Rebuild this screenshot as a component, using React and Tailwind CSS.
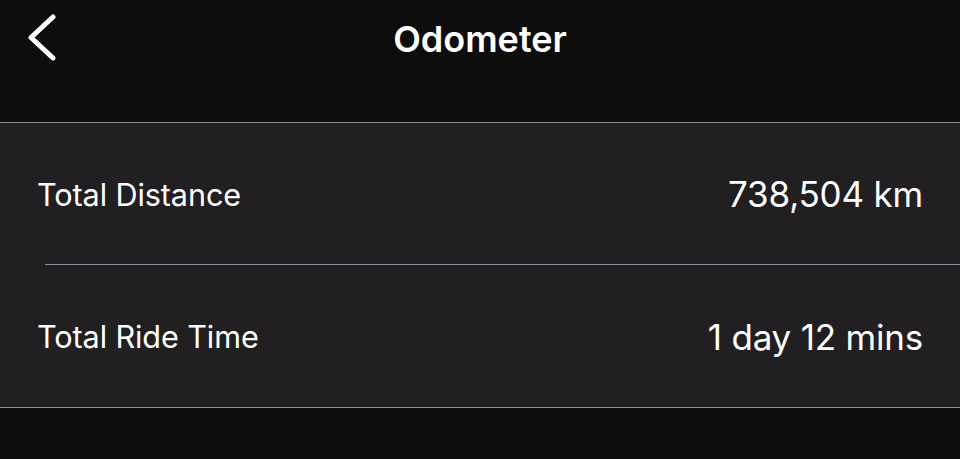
export default function App() {
  const rows = [
    { label: "Total Distance", value: "738,504 km" },
    { label: "Total Ride Time", value: "1 day 12 mins" },
  ];

  return (
    <div
      className="w-[960px] h-[459px] bg-[#0d0d0d] text-white overflow-hidden"
      style={{ fontFamily: "Inter, 'Noto Sans', sans-serif" }}
    >
      {/* header */}
      <header className="relative h-[122px]">
        <div className="flex h-[77px] items-center justify-center">
          <h1 className="text-[36px] font-semibold tracking-[0px]">Odometer</h1>
        </div>
        <svg
          className="absolute left-[26px] top-[14px]"
          width="32"
          height="48"
          viewBox="0 0 32 48"
          fill="none"
        >
          <path
            d="M27 3 L5 23.5 L27 44"
            stroke="white"
            strokeWidth="5"
            strokeLinecap="round"
            strokeLinejoin="round"
          />
        </svg>
      </header>

      {/* odometer list */}
      <section className="bg-[#211f21] border-t border-b border-[#8e8d92]">
        {rows.map((row, i) => (
          <div key={row.label} className="pl-[45px]">
            <div
              className={`flex items-center justify-between pr-[37px] ${
                i < rows.length - 1 ? "h-[142px] border-b border-[#8e8d92]" : "h-[142px]"
              }`}
            >
              <span className="-ml-[8px] pt-[2px] text-[30.6px] tracking-[-0.1px]">{row.label}</span>
              <span className="pt-[2px] text-[35px] tracking-[-0.2px]">{row.value}</span>
            </div>
          </div>
        ))}
      </section>
    </div>
  );
}
